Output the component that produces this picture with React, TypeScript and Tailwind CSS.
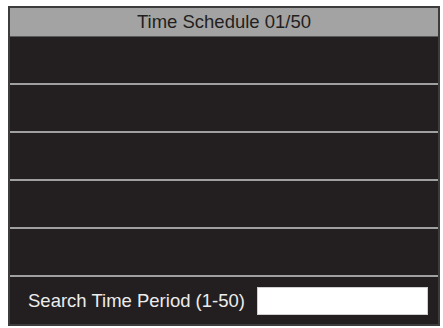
export default function App() {
  const rows = [0, 1, 2, 3, 4];
  return (
    <div className="w-[443px] h-[328px] bg-white pt-[6px] pl-[8px]" style={{ fontFamily: '"Liberation Sans", Arial, sans-serif' }}>
      <div className="w-[432px] h-[320px] border-2 border-[#3c3c3c] bg-[#231f20] flex flex-col">
        <div className="h-[29px] bg-[#a3a3a3] border-b border-[#5a5a5a] flex items-center justify-center text-[18.5px] text-[#231f20]">
          Time Schedule 01/50
        </div>
        {rows.map((r) => (
          <div key={r} className="h-[48px] border-b-2 border-[#a0a0a0]" />
        ))}
        <div className="flex-1 flex items-center pl-[18px] gap-[12px]">
          <span className="text-[18.5px] text-[#ececec]">Search Time Period (1-50)</span>
          <div className="w-[171px] h-[28px] bg-white border border-[#d0d0d0]" />
        </div>
      </div>
    </div>
  );
}
